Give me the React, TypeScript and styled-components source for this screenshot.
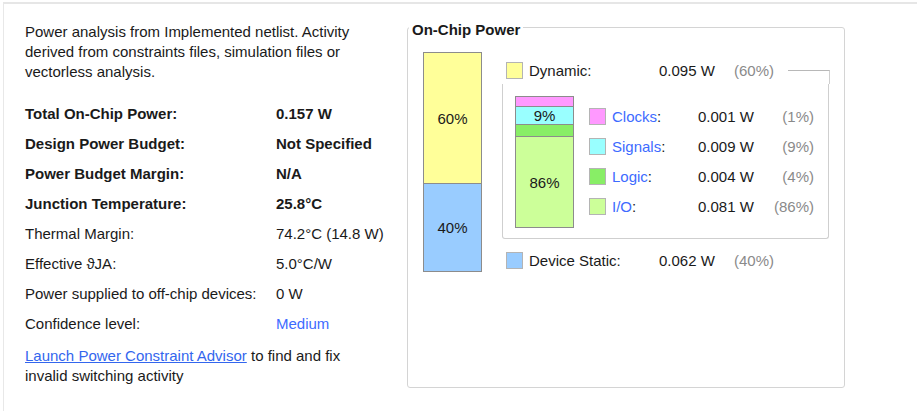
import styled, { createGlobalStyle } from "styled-components";

const GlobalStyle = createGlobalStyle`
  html, body {
    margin: 0;
    padding: 0;
    background: #fff;
  }
  body {
    font-family: "Liberation Sans", Arial, sans-serif;
    font-size: 15px;
    color: #1a1a1a;
  }
`;

const Page = styled.div`
  box-sizing: border-box;
  display: flex;
  height: 409px;
  margin: 2px 0 0 3px;
  border-top: 2px solid #e6e6e6;
  border-left: 1px solid #e8e8e8;
`;

const Summary = styled.div`
  box-sizing: border-box;
  flex: 0 0 403px;
  padding: 18px 0 0 21px;
`;

const Intro = styled.p`
  margin: 0;
  width: 350px;
  line-height: 20px;
`;

const Table = styled.div`
  display: grid;
  grid-template-columns: 251px auto;
  grid-auto-rows: 30px;
  align-items: center;
  margin-top: 16px;
`;

const Cell = styled.span<{ $bold?: boolean; $link?: boolean }>`
  font-weight: ${(p) => (p.$bold ? 700 : 400)};
  color: ${(p) => (p.$link ? "#3d6bff" : "#1a1a1a")};
  white-space: nowrap;
`;

const Advice = styled.p`
  margin: 8px 0 0;
  width: 350px;
  line-height: 20px;
`;

const Link = styled.a`
  color: #3366ee;
  text-decoration: underline;
  cursor: pointer;
`;

const Panel = styled.fieldset`
  box-sizing: border-box;
  flex: 0 0 438px;
  height: 372px;
  margin: 12px 0 0;
  padding: 0 0 0 15px;
  border: 1px solid #d4d4d4;
  border-radius: 3px;
  min-inline-size: 0;
`;

const Title = styled.legend`
  margin-left: -14px;
  padding: 6px 3px 0;
  font-weight: 700;
  line-height: 16px;
  color: #1a1a1a;
`;

const Chart = styled.div`
  display: flex;
  align-items: flex-start;
  margin-top: 14px;
`;

const Bar = styled.div`
  display: flex;
  flex-direction: column;
  width: 57px;
  border: 1px solid #8c8c8c;
  flex-shrink: 0;
`;

const Segment = styled.div<{ $color: string; $h: number }>`
  display: flex;
  align-items: center;
  justify-content: center;
  height: ${(p) => p.$h}px;
  background: ${(p) => p.$color};
  color: #1a1a1a;
  & + & {
    border-top: 1px solid #8c8c8c;
  }
`;

const Breakdown = styled.div`
  margin: 10px 0 0 20px;
  width: 327px;
`;

const HeadRow = styled.div`
  display: flex;
  align-items: center;
  height: 17px;
  padding-left: 4px;
`;

const Swatch = styled.span<{ $color: string }>`
  box-sizing: border-box;
  flex: 0 0 17px;
  height: 17px;
  margin-right: 6px;
  background: ${(p) => p.$color};
  border: 1px solid #b4b4b4;
`;

const Name = styled.span<{ $w: number }>`
  width: ${(p) => p.$w}px;
  white-space: nowrap;
`;

const Value = styled.span<{ $w: number }>`
  width: ${(p) => p.$w}px;
  white-space: nowrap;
`;

const Pct = styled.span<{ $w?: number }>`
  color: #8a8a8a;
  white-space: nowrap;
  width: ${(p) => (p.$w ? `${p.$w}px` : "auto")};
  text-align: ${(p) => (p.$w ? "right" : "left")};
`;

const Connector = styled.span`
  flex: 1;
  align-self: flex-end;
  height: 13px;
  margin: 0 -1px -5px 14px;
  border-top: 1px solid #b8b8b8;
  border-right: 1px solid #cfcfcf;
`;

const Group = styled.div`
  display: flex;
  align-items: flex-start;
  margin-top: 5px;
  padding: 12px 16px 10px 12px;
  border: 1px solid #cfcfcf;
  border-top: none;
  border-radius: 0 0 3px 3px;
`;

const Legend = styled.div`
  display: grid;
  grid-auto-rows: 30px;
  margin: 5px 0 0 15px;
`;

const LegendRow = styled.div`
  display: flex;
  align-items: center;
`;

const Kind = styled.span`
  width: 86px;
  white-space: nowrap;
`;

const KindLink = styled.span`
  color: #3d6bff;
`;

const StaticRow = styled(HeadRow)`
  margin-top: 13px;
`;

const parts = [
  { name: "Clocks", color: "#ff99ff", value: "0.001 W", pct: "(1%)", h: 9, label: "" },
  { name: "Signals", color: "#99ffff", value: "0.009 W", pct: "(9%)", h: 17, label: "9%" },
  { name: "Logic", color: "#88ee66", value: "0.004 W", pct: "(4%)", h: 11, label: "" },
  { name: "I/O", color: "#ccff99", value: "0.081 W", pct: "(86%)", h: 90, label: "86%" },
];

const rows: { label: string; value: string; bold?: boolean; link?: boolean }[] = [
  { label: "Total On-Chip Power:", value: "0.157 W", bold: true },
  { label: "Design Power Budget:", value: "Not Specified", bold: true },
  { label: "Power Budget Margin:", value: "N/A", bold: true },
  { label: "Junction Temperature:", value: "25.8°C", bold: true },
  { label: "Thermal Margin:", value: "74.2°C (14.8 W)" },
  { label: "Effective ϑJA:", value: "5.0°C/W" },
  { label: "Power supplied to off-chip devices:", value: "0 W" },
  { label: "Confidence level:", value: "Medium", link: true },
];

export default function App() {
  return (
    <>
      <GlobalStyle />
      <Page>
        <Summary>
          <Intro>
            Power analysis from Implemented netlist. Activity derived from constraints files,
            simulation files or vectorless analysis.
          </Intro>
          <Table>
            {rows.map((r) => [
              <Cell key={r.label} $bold={r.bold}>
                {r.label}
              </Cell>,
              <Cell key={r.label + "-v"} $bold={r.bold} $link={r.link}>
                {r.value}
              </Cell>,
            ])}
          </Table>
          <Advice>
            <Link>Launch Power Constraint Advisor</Link> to find and fix invalid switching activity
          </Advice>
        </Summary>
        <Panel>
          <Title>On-Chip Power</Title>
          <Chart>
            <Bar>
              <Segment $color="#ffff99" $h={130}>60%</Segment>
              <Segment $color="#99ccff" $h={87}>40%</Segment>
            </Bar>
            <Breakdown>
              <HeadRow>
                <Swatch $color="#ffff99" />
                <Name $w={130}>Dynamic:</Name>
                <Value $w={75}>0.095 W</Value>
                <Pct>(60%)</Pct>
                <Connector />
              </HeadRow>
              <Group>
                <Bar>
                  {parts.map((p) => (
                    <Segment key={p.name} $color={p.color} $h={p.h}>
                      {p.label}
                    </Segment>
                  ))}
                </Bar>
                <Legend>
                  {parts.map((p) => (
                    <LegendRow key={p.name}>
                      <Swatch $color={p.color} />
                      <Kind>
                        <KindLink>{p.name}</KindLink>:
                      </Kind>
                      <Value $w={70}>{p.value}</Value>
                      <Pct $w={46}>{p.pct}</Pct>
                    </LegendRow>
                  ))}
                </Legend>
              </Group>
              <StaticRow>
                <Swatch $color="#99ccff" />
                <Name $w={130}>Device Static:</Name>
                <Value $w={75}>0.062 W</Value>
                <Pct>(40%)</Pct>
              </StaticRow>
            </Breakdown>
          </Chart>
        </Panel>
      </Page>
    </>
  );
}
